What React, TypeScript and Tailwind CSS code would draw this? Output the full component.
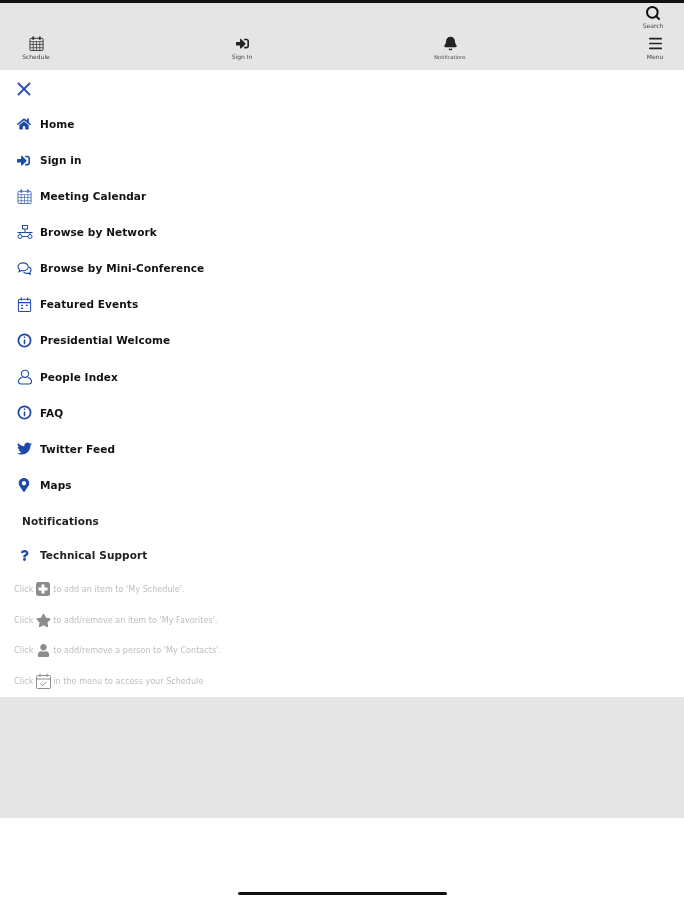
import { Bell, Menu, Search, X } from "lucide-react";
import type { ReactNode } from "react";
import { FaHome, FaMapMarkerAlt, FaQuestion, FaSignInAlt, FaStar, FaTwitter, FaUser } from "react-icons/fa";

const CalendarGrid = ({ className }: { className: string }) => (
  <svg viewBox="0 0 16 16" className={className} fill="none" stroke="currentColor" strokeWidth="1">
    <rect x="1" y="2.500" width="14" height="13" rx="1" />
    <path d="M1 6h14M1 9h14M1 12.500h14M4.500 6v9.500M8 6v9.500M11.500 6v9.500" strokeWidth="0.800" />
    <path d="M4.500 0.500v3.500M11.500 0.500v3.500" strokeWidth="2" />
  </svg>
);

const NetworkIcon = () => (
  <svg viewBox="0 0 16 14" className="h-[14px] w-[16px]" fill="none" stroke="currentColor" strokeWidth="1">
    <rect x="5.500" y="0.500" width="5" height="3.500" />
    <path d="M8 4v3.500M0.500 7.500h15M3 7.500v2.500M13 7.500v2.500" />
    <circle cx="3" cy="11.500" r="2" />
    <circle cx="13" cy="11.500" r="2" />
    <path d="M5 11.500h6" />
  </svg>
);

const ChatIcon = () => (
  <svg viewBox="0 0 16 16" className="h-[15px] w-[15px]" fill="none" stroke="currentColor" strokeWidth="1.200">
    <path d="M6.500 2C3.500 2 1 3.800 1 6.200c0 1.300.7 2.300 1.800 3.100L2.200 11.500l2.600-1.300c.6.100 1.100.2 1.700.2 3 0 5.500-1.800 5.500-4.200S9.500 2 6.500 2z" />
    <path d="M13 6.500c1.200.7 2 1.800 2 3 0 1-.5 1.900-1.300 2.600l.5 2-2.300-1.100c-1.800.4-3.900 0-5-1.300" />
  </svg>
);

const EventIcon = () => (
  <svg viewBox="0 0 16 16" className="h-[15px] w-[15px]" fill="none" stroke="currentColor" strokeWidth="1.100">
    <rect x="1.500" y="2.500" width="13" height="13" rx="1.500" />
    <path d="M1.500 6h13M4.500 0.500v3.500M11.500 0.500v3.500" />
    <path d="M4.500 9h2M9.500 9h2M4.500 12h2" strokeWidth="1.400" />
  </svg>
);

const InfoIcon = () => (
  <svg viewBox="0 0 16 16" className="h-[15px] w-[15px]" fill="none" stroke="currentColor" strokeWidth="1.900">
    <circle cx="8" cy="8" r="6.500" />
    <path d="M8 7v5M8 3.800v1.600" strokeWidth="1.600" />
  </svg>
);

const PersonIcon = () => (
  <svg viewBox="0 0 16 16" className="h-[16px] w-[16px]" fill="none" stroke="currentColor" strokeWidth="1.100">
    <circle cx="8" cy="4.800" r="3.600" />
    <path d="M5.500 8.500C3 9 1.500 10.500 1.500 12.500c0 1.600 1 2.500 2.500 2.500h8c1.500 0 2.500-.9 2.500-2.500 0-2-1.500-3.500-4-4" />
  </svg>
);

const PlusBoxIcon = () => (
  <svg viewBox="0 0 14 14" className="h-[14px] w-[14px]">
    <rect width="14" height="14" rx="2.500" fill="currentColor" />
    <path d="M5.500 2.500h3v3h3v3h-3v3h-3v-3h-3v-3h3z" fill="#fff" />
  </svg>
);

const ScheduleCheckIcon = () => (
  <svg viewBox="0 0 15 16" className="h-[16px] w-[15px]" fill="none" stroke="currentColor" strokeWidth="1">
    <rect x="0.500" y="2.500" width="14" height="13" rx="1" />
    <path d="M0.500 6h14M4 0.500v3.500M11 0.500v3.500M4.500 10.500l2 2 4-3.500" />
  </svg>
);

const menuItems: { label: string; icon: ReactNode }[] = [
  { label: "Home", icon: <FaHome className="h-[14px] w-[14px]" /> },
  { label: "Sign in", icon: <FaSignInAlt className="h-[13px] w-[13px]" /> },
  { label: "Meeting Calendar", icon: <CalendarGrid className="h-[15px] w-[15px] text-[#4a6cb8]" /> },
  { label: "Browse by Network", icon: <NetworkIcon /> },
  { label: "Browse by Mini-Conference", icon: <ChatIcon /> },
  { label: "Featured Events", icon: <EventIcon /> },
  { label: "Presidential Welcome", icon: <InfoIcon /> },
  { label: "People Index", icon: <PersonIcon /> },
  { label: "FAQ", icon: <InfoIcon /> },
  { label: "Twitter Feed", icon: <FaTwitter className="h-[15px] w-[15px]" /> },
  { label: "Maps", icon: <FaMapMarkerAlt className="h-[14px] w-[14px]" /> },
];

const hints: { after: string; icon: ReactNode }[] = [
  { after: "to add an item to 'My Schedule'.", icon: <PlusBoxIcon /> },
  { after: "to add/remove an item to 'My Favorites'.", icon: <FaStar className="h-[15px] w-[15px]" /> },
  { after: "to add/remove a person to 'My Contacts'.", icon: <FaUser className="h-[13px] w-[13px]" /> },
  { after: "in the menu to access your Schedule", icon: <ScheduleCheckIcon /> },
];

function HeaderItem({ label, children, small }: { label: string; children: ReactNode; small?: boolean }) {
  return (
    <div className="flex w-[40px] flex-col items-center">
      <div className="flex h-[17px] items-center justify-center pt-[1px] text-[#222]">{children}</div>
      <span className={`mt-[2px] whitespace-nowrap leading-[8px] text-[#444] ${small ? "text-[5px]" : "text-[6px]"}`}>{label}</span>
    </div>
  );
}

function MenuRow({ label, icon }: { label: string; icon: ReactNode }) {
  return (
    <div className="flex h-[36.100px] items-center pl-[16px]">
      <div className="flex w-[24px] shrink-0 items-center pl-[0.500px] text-[#1d4aa8]">{icon}</div>
      <span className="pt-[1.500px] text-[10.500px] font-bold tracking-[0.100px] text-[#111]">{label}</span>
    </div>
  );
}

export default function App() {
  return (
    <div className="flex h-[900px] w-[684px] flex-col overflow-hidden bg-white font-['DejaVu_Sans',sans-serif] blur-[0.4px]">
      <div className="h-[3px] bg-[#111]" />

      <header className="flex h-[67px] flex-col bg-[#e5e5e5]">
        <div className="flex justify-end pr-[11px] pt-[2px]">
          <div className="flex w-[40px] flex-col items-center">
            <Search className="h-[16px] w-[16px] text-[#111]" strokeWidth={3} />
            <span className="mt-[1px] text-[6px] leading-[8px] text-[#444]">Search</span>
          </div>
        </div>
        <div className="mt-[4px] flex items-start pl-[16px]">
          <HeaderItem label="Schedule">
            <CalendarGrid className="h-[15px] w-[15px] text-[#333]" />
          </HeaderItem>
          <div className="ml-[166px]">
            <HeaderItem label="Sign In">
              <FaSignInAlt className="h-[13px] w-[13px]" />
            </HeaderItem>
          </div>
          <div className="ml-[168px]">
            <HeaderItem label="Notifications" small>
              <Bell className="h-[15px] w-[15px]" fill="currentColor" />
            </HeaderItem>
          </div>
          <div className="ml-[165px]">
            <HeaderItem label="Menu">
              <Menu className="h-[17px] w-[17px]" strokeWidth={2.400} />
            </HeaderItem>
          </div>
        </div>
      </header>

      <nav className="flex h-[627px] flex-col">
        <div className="flex h-[36px] items-center pl-[13px] pt-[1px]">
          <X className="h-[22px] w-[22px] text-[#2a50b0]" strokeWidth={2} />
        </div>
        {menuItems.map((item) => (
          <MenuRow key={item.label} label={item.label} icon={item.icon} />
        ))}
        <div className="flex h-[36px] items-center pl-[22px]">
          <span className="pt-[1.500px] text-[10.500px] font-bold tracking-[0.100px] text-[#222]">Notifications</span>
        </div>
        <div className="-mt-[2px] flex h-[36px] items-center pl-[16px]">
          <div className="flex w-[24px] shrink-0 pl-[3px] text-[#1d4aa8]">
            <FaQuestion className="h-[11px] w-[11px]" />
          </div>
          <span className="pt-[1.500px] text-[10.500px] font-bold tracking-[0.100px] text-[#222]">Technical Support</span>
        </div>

        <div className="mt-[1px] flex flex-col">
          {hints.map((hint) => (
            <div key={hint.after} className="flex h-[30.700px] items-center pl-[14px] text-[8px] tracking-[0.050px] text-[#bdbdbd]">
              <span className="pt-[1px]">Click</span>
              <span className="flex w-[20px] justify-center text-[#8c8c8c]">{hint.icon}</span>
              <span className="pt-[1px]">{hint.after}</span>
            </div>
          ))}
        </div>
      </nav>

      <div className="h-[121px] bg-[#e5e5e5]" />

      <div className="flex flex-1 justify-center pt-[74px]">
        <div className="h-[3px] w-[209px] rounded-full bg-[#111]" />
      </div>
    </div>
  );
}
